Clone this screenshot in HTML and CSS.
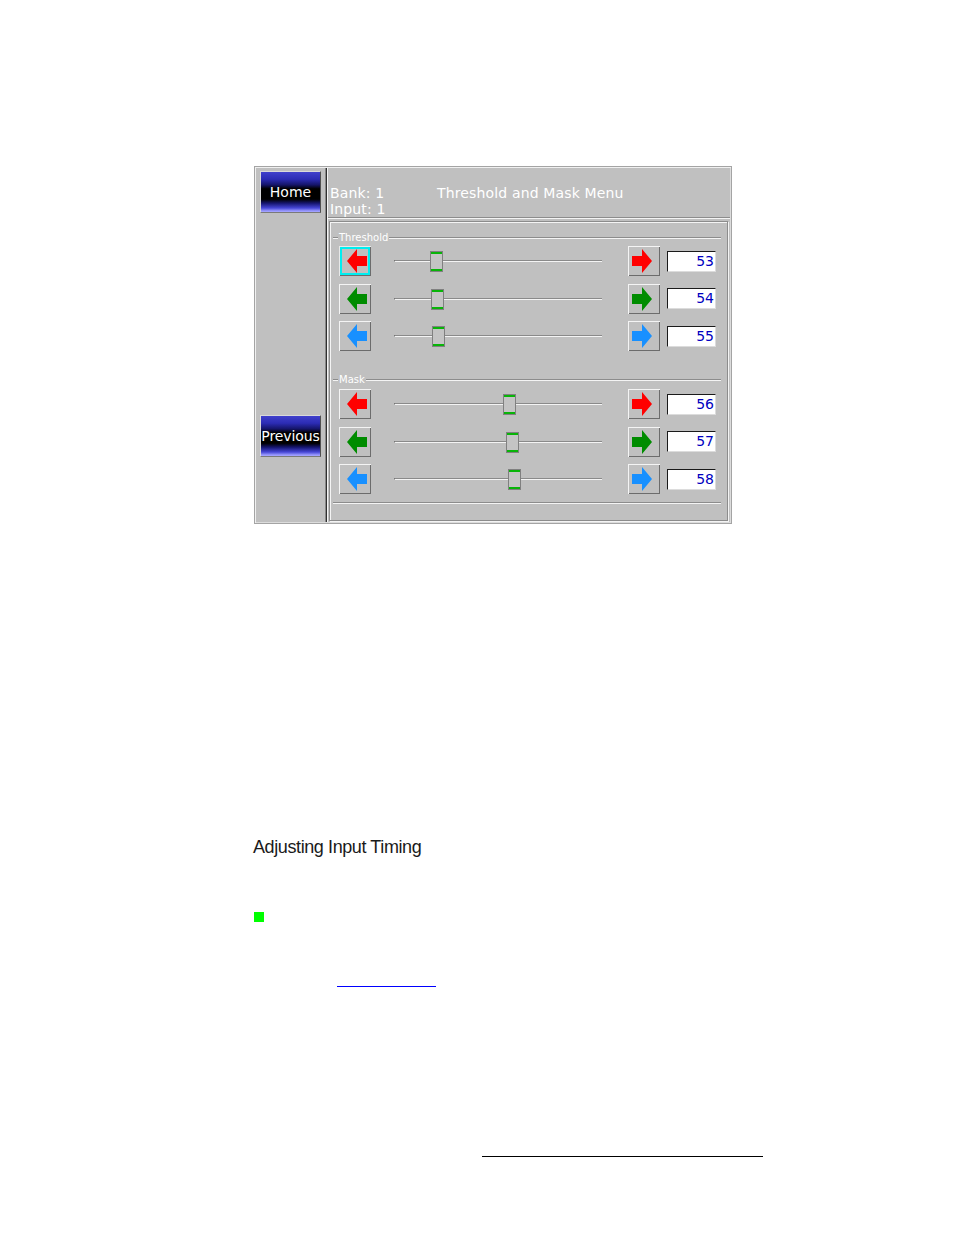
FILE: index.html
```html
<!DOCTYPE html>
<html>
<head>
<meta charset="utf-8">
<title>Threshold and Mask Menu</title>
<link rel="stylesheet" href="styles.css">
</head>
<body>
<div class="page">
  <div class="panel">
    <div class="sidebar">
      <div class="navbtn">Home</div>
      <div class="navbtn prev">Previous</div>
    </div>
    <div class="main">
      <div class="header">
        <span>Bank: 1</span><span>Threshold and Mask Menu</span>
        <span>Input: 1</span>
      </div>
      <div class="frame">
        <div class="ghead"><span class="lead"></span><span class="glabel">Threshold</span><span class="gline"></span></div>
        <div class="rows">
          <div class="row">
            <div class="abtn focus"><svg viewBox="0 0 32 30" width="32" height="30"><polygon class="red" points="8,15 18,3 18,10 28,10 28,20 18,20 18,27"/></svg></div>
            <div class="slider"><div class="rail"></div><div class="thumb" style="left:36px"></div></div>
            <div class="abtn"><svg viewBox="0 0 32 30" width="32" height="30"><polygon class="red" points="24,15 14,3 14,10 4,10 4,20 14,20 14,27"/></svg></div>
            <div class="val">53</div>
          </div>
          <div class="row">
            <div class="abtn"><svg viewBox="0 0 32 30" width="32" height="30"><polygon class="green" points="8,15 18,3 18,10 28,10 28,20 18,20 18,27"/></svg></div>
            <div class="slider"><div class="rail"></div><div class="thumb" style="left:37px"></div></div>
            <div class="abtn"><svg viewBox="0 0 32 30" width="32" height="30"><polygon class="green" points="24,15 14,3 14,10 4,10 4,20 14,20 14,27"/></svg></div>
            <div class="val">54</div>
          </div>
          <div class="row">
            <div class="abtn"><svg viewBox="0 0 32 30" width="32" height="30"><polygon class="blue" points="8,15 18,3 18,10 28,10 28,20 18,20 18,27"/></svg></div>
            <div class="slider"><div class="rail"></div><div class="thumb" style="left:38px"></div></div>
            <div class="abtn"><svg viewBox="0 0 32 30" width="32" height="30"><polygon class="blue" points="24,15 14,3 14,10 4,10 4,20 14,20 14,27"/></svg></div>
            <div class="val">55</div>
          </div>
        </div>
        <div class="ghead second"><span class="lead"></span><span class="glabel">Mask</span><span class="gline"></span></div>
        <div class="rows mask">
          <div class="row">
            <div class="abtn"><svg viewBox="0 0 32 30" width="32" height="30"><polygon class="red" points="8,15 18,3 18,10 28,10 28,20 18,20 18,27"/></svg></div>
            <div class="slider"><div class="rail"></div><div class="thumb" style="left:109px"></div></div>
            <div class="abtn"><svg viewBox="0 0 32 30" width="32" height="30"><polygon class="red" points="24,15 14,3 14,10 4,10 4,20 14,20 14,27"/></svg></div>
            <div class="val">56</div>
          </div>
          <div class="row">
            <div class="abtn"><svg viewBox="0 0 32 30" width="32" height="30"><polygon class="green" points="8,15 18,3 18,10 28,10 28,20 18,20 18,27"/></svg></div>
            <div class="slider"><div class="rail"></div><div class="thumb" style="left:112px"></div></div>
            <div class="abtn"><svg viewBox="0 0 32 30" width="32" height="30"><polygon class="green" points="24,15 14,3 14,10 4,10 4,20 14,20 14,27"/></svg></div>
            <div class="val">57</div>
          </div>
          <div class="row">
            <div class="abtn"><svg viewBox="0 0 32 30" width="32" height="30"><polygon class="blue" points="8,15 18,3 18,10 28,10 28,20 18,20 18,27"/></svg></div>
            <div class="slider"><div class="rail"></div><div class="thumb" style="left:114px"></div></div>
            <div class="abtn"><svg viewBox="0 0 32 30" width="32" height="30"><polygon class="blue" points="24,15 14,3 14,10 4,10 4,20 14,20 14,27"/></svg></div>
            <div class="val">58</div>
          </div>
        </div>
        <div class="endline"></div>
      </div>
    </div>
  </div>
  <h2 class="title">Adjusting Input Timing</h2>
  <div class="bullet"></div>
  <div class="link"></div>
  <div class="rule"></div>
</div>
</body>
</html>
```
FILE: styles.css
```css
html, body {
  margin: 0;
  padding: 0;
  background: #ffffff;
}
.page {
  padding-top: 166px;
  padding-bottom: 40px;
  font-family: "DejaVu Sans", sans-serif;
}
.panel {
  margin-left: 254px;
  width: 478px;
  height: 358px;
  box-sizing: border-box;
  border: 1px solid #a4a4a4;
  padding: 1px;
  background: #c0c0c0;
  box-shadow: inset 1px 1px 0 #f0f0f0, inset -1px -1px 0 #dcdcdc;
  display: flex;
}
.sidebar {
  width: 61px;
  flex: none;
  border-right: 1px solid #888888;
  box-shadow: 1px 0 0 #303030;
  padding: 3px 4px;
  box-sizing: content-box;
  display: flex;
  flex-direction: column;
  align-items: flex-start;
}
.navbtn {
  width: 61px;
  height: 42px;
  box-sizing: border-box;
  border: 1px solid;
  border-color: #dadada #505050 #7a7a7a #dadada;
  background: linear-gradient(#4040cc 0%, #2c2cb4 18%, #15156a 32%, #000000 42%, #000000 68%, #15156e 78%, #4646d6 90%, #a0a0ff 98%);
  color: #ffffff;
  font-size: 14px;
  line-height: 40px;
  text-align: center;
  white-space: nowrap;
  overflow: hidden;
}
.navbtn.prev {
  margin-top: 202px;
  letter-spacing: -0.1px;
}
.main {
  flex: 1;
  margin-left: 1px;
  border-left: 1px solid #f4f4f4;
  display: flex;
  flex-direction: column;
  min-width: 0;
}
.header {
  height: 50px;
  box-sizing: border-box;
  padding: 18px 0 0 2px;
  border-bottom: 1px solid #8c8c8c;
  box-shadow: 0 1px 0 #f4f4f4;
  display: grid;
  grid-template-columns: 107px auto;
  font-size: 14px;
  line-height: 15px;
  letter-spacing: 0.15px;
  color: #ffffff;
  white-space: nowrap;
}
.frame {
  flex: 1;
  margin: 3px 2px 1px 1px;
  border: 1px solid #8c8c8c;
  box-shadow: inset 1px 1px 0 #f4f4f4, 1px 1px 0 #f4f4f4;
  padding: 10px 6px 0 3px;
  display: flex;
  flex-direction: column;
}
.ghead {
  height: 12px;
  display: flex;
  align-items: center;
}
.ghead.second {
  margin-top: 23px;
}
.lead {
  width: 5px;
  height: 0;
  border-top: 1px solid #8c8c8c;
  border-bottom: 1px solid #f4f4f4;
}
.gline {
  flex: 1;
  height: 0;
  border-top: 1px solid #8c8c8c;
  border-bottom: 1px solid #f4f4f4;
}
.glabel {
  font-size: 10px;
  line-height: 10px;
  color: #ffffff;
  padding: 0 1px;
}
.rows {
  margin-top: 2px;
  display: flex;
  flex-direction: column;
  gap: 7.5px;
}
.rows.mask {
  margin-top: 3px;
}
.row {
  height: 30px;
  display: flex;
  align-items: center;
  padding-left: 6px;
}
.abtn {
  width: 32px;
  height: 30px;
  flex: none;
  box-shadow: inset 1px 1px 0 #f4f4f4, inset -1px -1px 0 #6c6c6c;
}
.abtn svg {
  display: block;
}
.abtn.focus {
  box-shadow: inset 1px 1px 0 #e8e8e8, inset -1px -1px 0 #6c6c6c, inset 0 0 0 3px #00eef0;
}
.red { fill: #ff0000; }
.green { fill: #008c00; }
.blue { fill: #1890ff; }
.slider {
  position: relative;
  width: 208px;
  height: 30px;
  margin: 0 26px 0 23px;
  display: flex;
  align-items: center;
  flex: none;
}
.rail {
  width: 100%;
  height: 0;
  border-top: 1px solid #8a8a8a;
  border-bottom: 1px solid #f4f4f4;
  border-left: 1px solid #606060;
}
.thumb {
  position: absolute;
  top: 5px;
  width: 13px;
  height: 21px;
  box-sizing: border-box;
  border: 1px solid #808080;
  background: #c4c4c4;
  box-shadow: inset 0 2px 0 #08b408, inset 0 -2px 0 #08b408;
}
.val {
  margin-left: 7px;
  width: 49px;
  height: 21px;
  box-sizing: border-box;
  border: 1px solid;
  border-color: #1a1a1a #dcdcdc #dcdcdc #1a1a1a;
  background: #ffffff;
  color: #0000c0;
  font-size: 14px;
  line-height: 19px;
  text-align: right;
  padding-right: 1px;
  flex: none;
}
.endline {
  margin-top: 8px;
  height: 0;
  border-top: 1px solid #8c8c8c;
  border-bottom: 1px solid #f4f4f4;
}
.title {
  margin: 313px 0 0 253px;
  font-family: "Liberation Sans", Arial, sans-serif;
  font-weight: normal;
  font-size: 18px;
  line-height: 20px;
  letter-spacing: -0.4px;
  color: #1a1a1a;
}
.bullet {
  margin: 55px 0 0 254px;
  width: 10px;
  height: 10px;
  background: #00ff00;
}
.link {
  margin: 64px 0 0 337px;
  width: 99px;
  height: 1px;
  background: #0000ff;
}
.rule {
  margin: 169px 0 0 482px;
  width: 281px;
  height: 1px;
  background: #000000;
}
```
